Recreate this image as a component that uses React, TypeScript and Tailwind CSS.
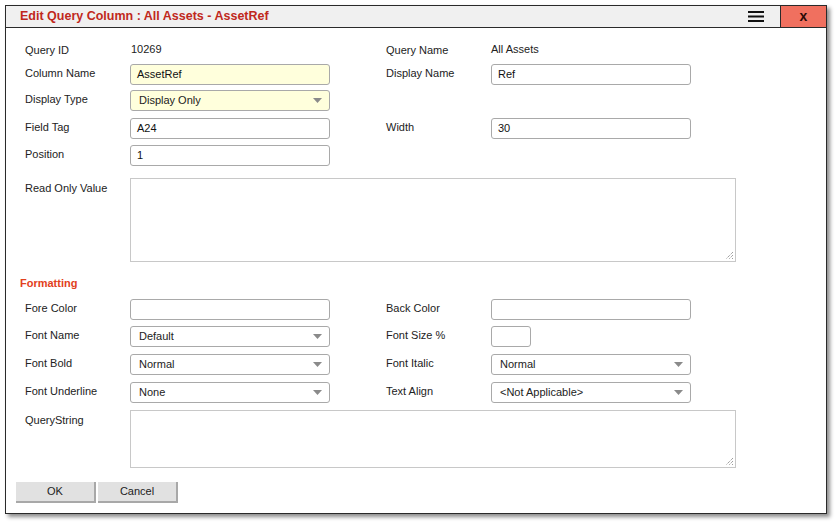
import React from "react";

const font = { fontFamily: '"Liberation Sans", Arial, sans-serif' };

function Label({ children, className = "" }: { children: React.ReactNode; className?: string }) {
  return <div className={`w-[110px] shrink-0 pl-[5px] text-[11px] text-[#222] ${className}`}>{children}</div>;
}

function TextBox({ value = "", yellow = false, w = "w-[200px]" }: { value?: string; yellow?: boolean; w?: string }) {
  return (
    <div
      className={`${w} h-[21px] rounded-[3px] border border-[#a9a9a9] px-[6px] flex items-center text-[11px] text-[#111] ${
        yellow ? "bg-[#ffffdc]" : "bg-white"
      }`}
    >
      {value}
    </div>
  );
}

function Select({ value, yellow = false }: { value: string; yellow?: boolean }) {
  return (
    <div
      className={`w-[200px] h-[21px] rounded-[3px] border border-[#a9a9a9] pl-[8px] pr-[6px] flex items-center justify-between text-[11px] text-[#222] ${
        yellow ? "bg-[#ffffdc]" : "bg-white"
      }`}
    >
      <span>{value}</span>
      <svg width="9" height="5" viewBox="0 0 9 5" className="mr-[1px]">
        <path d="M0 0 L9 0 L4.5 5 Z" fill="#8a8a8a" />
      </svg>
    </div>
  );
}

function TextArea({ h }: { h: string }) {
  return (
    <div className={`relative w-[606px] ${h} border border-[#c8c8c8] bg-white`}>
      <svg width="9" height="9" viewBox="0 0 9 9" className="absolute right-[1px] bottom-[1px]">
        <path d="M8 1 L1 8 M8 4 L4 8 M8 7 L7 8" stroke="#777" strokeWidth="1" strokeDasharray="1 1" />
      </svg>
    </div>
  );
}

function Row({ className = "", children }: { className?: string; children: React.ReactNode }) {
  return <div className={`flex items-center ${className}`}>{children}</div>;
}

function Half({ children }: { children: React.ReactNode }) {
  return <div className="flex items-center w-[361px]">{children}</div>;
}

export default function App() {
  return (
    <div className="w-[836px] h-[522px] bg-white p-[5px]" style={font}>
      <div className="w-[822px] h-[509px] border border-[#2a2a2a] bg-white flex flex-col shadow-[3px_3px_4px_rgba(0,0,0,0.45)]">
        {/* title bar */}
        <div className="h-[22px] shrink-0 flex items-stretch bg-[#f0f0f0] border-b border-[#2a2a2a]">
          <div className="flex-1 pl-[14px] flex items-center text-[12.5px] font-bold text-[#c0281c]">
            Edit Query Column : All Assets - AssetRef
          </div>
          <div className="w-[48px] flex items-center justify-center">
            <svg width="16" height="11" viewBox="0 0 16 11">
              <rect x="0" y="0" width="16" height="2" fill="#111" />
              <rect x="0" y="4.5" width="16" height="2" fill="#111" />
              <rect x="0" y="9" width="16" height="2" fill="#111" />
            </svg>
          </div>
          <div className="w-[46px] bg-[#f0705f] border-l border-[#2a2a2a] flex items-center justify-center text-[14px] font-bold text-[#2a0a06] leading-none pb-[2px]">
            x
          </div>
        </div>

        {/* body */}
        <div className="flex flex-col pl-[14px]">
          <Row className="mt-[12px] h-[20px]">
            <Half>
              <Label>Query ID</Label>
              <div className="text-[11px] text-[#222] pl-[1px] -mt-[2px]">10269</div>
            </Half>
            <Half>
              <Label>Query Name</Label>
              <div className="text-[11px] text-[#222] -mt-[2px]">All Assets</div>
            </Half>
          </Row>
          <Row className="mt-[4px]">
            <Half>
              <Label className="-mt-[2px]">Column Name</Label>
              <TextBox value="AssetRef" yellow />
            </Half>
            <Half>
              <Label className="-mt-[2px]">Display Name</Label>
              <TextBox value="Ref" />
            </Half>
          </Row>
          <Row className="mt-[5px]">
            <Half>
              <Label className="-mt-[2px]">Display Type</Label>
              <Select value="Display Only" yellow />
            </Half>
          </Row>
          <Row className="mt-[7px]">
            <Half>
              <Label className="-mt-[2px]">Field Tag</Label>
              <TextBox value="A24" />
            </Half>
            <Half>
              <Label className="-mt-[2px]">Width</Label>
              <TextBox value="30" />
            </Half>
          </Row>
          <Row className="mt-[6px]">
            <Half>
              <Label className="-mt-[2px]">Position</Label>
              <TextBox value="1" />
            </Half>
          </Row>
          <div className="flex items-start mt-[12px]">
            <Label className="mt-[2px]">Read Only Value</Label>
            <TextArea h="h-[84px]" />
          </div>

          <div className="mt-[14px] h-[14px] flex items-center text-[11px] font-bold text-[#e2401c]">Formatting</div>

          <Row className="mt-[9px]">
            <Half>
              <Label className="-mt-[2px]">Fore Color</Label>
              <TextBox />
            </Half>
            <Half>
              <Label className="-mt-[2px]">Back Color</Label>
              <TextBox />
            </Half>
          </Row>
          <Row className="mt-[6px]">
            <Half>
              <Label className="-mt-[2px]">Font Name</Label>
              <Select value="Default" />
            </Half>
            <Half>
              <Label className="-mt-[2px]">Font Size %</Label>
              <TextBox w="w-[40px]" />
            </Half>
          </Row>
          <Row className="mt-[7px]">
            <Half>
              <Label className="-mt-[2px]">Font Bold</Label>
              <Select value="Normal" />
            </Half>
            <Half>
              <Label className="-mt-[2px]">Font Italic</Label>
              <Select value="Normal" />
            </Half>
          </Row>
          <Row className="mt-[7px]">
            <Half>
              <Label className="-mt-[2px]">Font Underline</Label>
              <Select value="None" />
            </Half>
            <Half>
              <Label className="-mt-[2px]">Text Align</Label>
              <Select value="<Not Applicable>" />
            </Half>
          </Row>
          <div className="flex items-start mt-[7px]">
            <Label className="mt-[2px]">QueryString</Label>
            <TextArea h="h-[58px]" />
          </div>
        </div>

        <div className="flex gap-[2px] pl-[10px] mt-[14px]">
          <button className="w-[80px] h-[21px] bg-[#e1e1e1] border-r-2 border-b-2 border-[#a8a8a8] text-[11px] text-[#222]">
            OK
          </button>
          <button className="w-[80px] h-[21px] bg-[#e1e1e1] border-r-2 border-b-2 border-[#a8a8a8] text-[11px] text-[#222]">
            Cancel
          </button>
        </div>
      </div>
    </div>
  );
}
